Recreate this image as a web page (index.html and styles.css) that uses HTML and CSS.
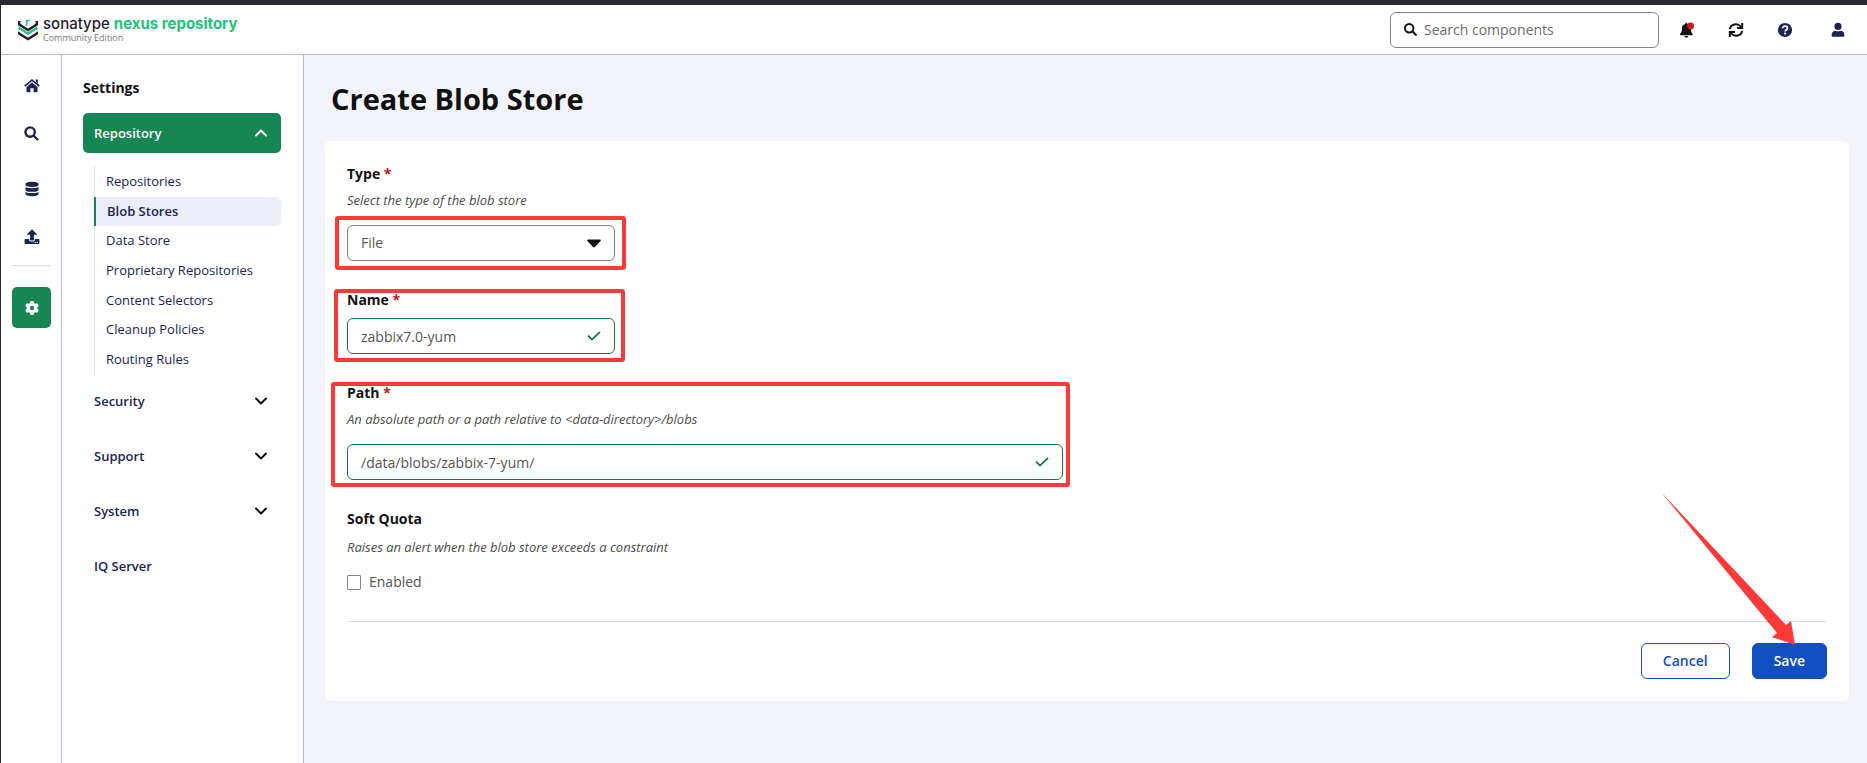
FILE: index.html
```html
<!DOCTYPE html>
<html lang="en">
<head>
<meta charset="utf-8">
<title>Create Blob Store</title>
<link rel="stylesheet" href="styles.css">
</head>
<body>
<header class="topbar">
  <a class="brand" href="#">
    <svg class="brand-mark" width="20" height="22" viewBox="0 0 20 22" fill="none" stroke-width="2.4" aria-hidden="true">
      <path d="M1.2 2v3.600L10 11l8.800-5.400V2" stroke="#231f30"/>
      <path d="M.6 8.800 10 14.700l9.400-5.900" stroke="#1bc47a"/>
      <path d="M.6 12.800v1.400L10 20l9.400-5.800v-1.400" stroke="#231f30"/>
      <path d="M8.600 7V.800M8.600 3.200C9 1.600 10 1.100 11.800 1.300" stroke="#1bc47a" stroke-width="1.500"/>
    </svg>
    <span class="brand-text">
      <span class="brand-name">sonatype <span class="brand-product">nexus repository</span></span>
      <span class="brand-edition">Community Edition</span>
    </span>
  </a>
  <div class="tools">
    <label class="search">
      <svg width="13" height="13" viewBox="0 0 13 13" fill="none" stroke="#111" stroke-width="2" aria-hidden="true"><circle cx="5.200" cy="5.200" r="4.200"/><path d="m8.300 8.300 4.200 4.200"/></svg>
      <input type="search" placeholder="Search components" aria-label="Search components">
    </label>
    <nav class="actions" aria-label="Global actions">
      <button class="icon-button" type="button" aria-label="Notifications">
        <svg width="16" height="16" viewBox="0 0 16 16" aria-hidden="true"><path fill="#111" d="M6.300 1.900C6.300.5 8.300.5 8.300 1.900 11 2.500 11.800 4.500 11.800 6.500c0 3 .7 4 1.700 5.200.6.700.2 1.600-.7 1.600H1.900c-.9 0-1.300-.9-.7-1.600C2.200 10.500 2.900 9.500 2.900 6.500c0-2 .8-4 3.400-4.600ZM5.400 14h3.900c0 2.300-3.900 2.300-3.900 0Z"/><circle cx="11.600" cy="4" r="3.400" fill="#d3161b"/></svg>
      </button>
      <button class="icon-button" type="button" aria-label="Refresh">
        <svg width="16" height="16" viewBox="0 0 16 16" fill="none" stroke="#111" stroke-width="2" aria-hidden="true"><path d="M1.800 7.200C2.600 2.100 9.300.5 13 4.600M14.200.9v5.200H9"/><path d="M14.200 8.900C13.400 14 6.700 15.500 3 11.400M1.800 15.100V9.900H7"/></svg>
      </button>
      <button class="icon-button" type="button" aria-label="Help">
        <svg width="16" height="16" viewBox="0 0 16 16" aria-hidden="true"><circle cx="8" cy="8" r="7.100" fill="#1c2452"/><path d="M5.700 6.300c0-3 4.800-2.700 4.800 0 0 1.500-2.300 1.500-2.300 3.100" fill="none" stroke="#fff" stroke-width="1.700"/><circle cx="8.100" cy="11.600" r="1.150" fill="#fff"/></svg>
      </button>
      <button class="icon-button account" type="button" aria-label="User">
        <svg width="16" height="16" viewBox="0 0 16 16" fill="#1c2452" aria-hidden="true"><circle cx="8" cy="4.300" r="3.600"/><path d="M1.600 13.200c0-3 1.700-4.500 3.900-4.500 1.600.8 3.400.8 5 0 2.200 0 3.900 1.500 3.900 4.500 0 1-.5 1.600-1.400 1.600H3c-.9 0-1.400-.6-1.400-1.600Z"/></svg>
      </button>
    </nav>
  </div>
</header>

<div class="shell">
  <nav class="rail" aria-label="Primary">
    <a class="rail-link" href="#" aria-label="Dashboard">
      <svg width="16" height="14" viewBox="0 0 16 14" aria-hidden="true"><path d="m.7 7.100 7.300-6 7.300 6" fill="none" stroke="#1c2452" stroke-width="1.700"/><path fill="#1c2452" d="M11.800.6h2v4.200l-2-1.700ZM8 3.600l5.500 4.500v4.500c0 .4-.3.700-.7.700H9.600V9.200H6.400v4.100H3.200c-.4 0-.7-.3-.7-.7V8.100Z"/></svg>
    </a>
    <a class="rail-link" href="#" aria-label="Search">
      <svg width="15" height="15" viewBox="0 0 15 15" fill="none" stroke="#1c2452" stroke-width="2.400" aria-hidden="true"><circle cx="6.100" cy="6.100" r="4.700"/><path d="m9.500 9.500 4.500 4.500"/></svg>
    </a>
    <a class="rail-link" href="#" aria-label="Browse">
      <svg width="14" height="16" viewBox="0 0 14 16" fill="#1c2452" aria-hidden="true"><path d="M.5 3C.5-.1 13.500-.1 13.500 3v1.100c0 2.600-13 2.600-13 0ZM.5 6.100c2.700 1.600 10.300 1.600 13 0v2.800c0 2.600-13 2.600-13 0ZM.5 10.900c2.700 1.600 10.300 1.600 13 0v2c0 3-13 3-13 0Z"/></svg>
    </a>
    <a class="rail-link" href="#" aria-label="Upload">
      <svg width="16" height="16" viewBox="0 0 16 16" fill="#1c2452" aria-hidden="true"><path d="M6.100 5.800H3.500c-.5 0-.7-.5-.3-.9L7.500.7c.3-.3.700-.3 1 0l4.300 4.200c.4.400.2.900-.3.900H9.900v5c0 .4-.3.700-.7.700H6.800c-.4 0-.7-.3-.7-.7Z"/><path d="M1.300 10h3.900v1c0 .9.600 1.500 1.500 1.500h2.600c.9 0 1.500-.6 1.500-1.500v-1h3.900c.4 0 .7.300.7.700v3.600c0 .4-.3.700-.7.700H1.300c-.4 0-.7-.3-.7-.7v-3.600c0-.4.300-.7.700-.7Z"/><path fill="#fff" d="M10.500 13.100h1.200v1h-1.200zM12.700 13.100h1.200v1h-1.200z"/></svg>
    </a>
    <a class="rail-link rail-current" href="#" aria-label="Settings" aria-current="page">
      <svg width="16" height="16" viewBox="0 0 16 16" aria-hidden="true"><g fill="#fff"><circle cx="8" cy="8" r="5.400"/><rect x="6.100" y="1" width="3.800" height="14" rx="1.200"/><rect x="6.100" y="1" width="3.800" height="14" rx="1.200" transform="rotate(60 8 8)"/><rect x="6.100" y="1" width="3.800" height="14" rx="1.200" transform="rotate(120 8 8)"/></g><circle cx="8" cy="8" r="2.200" fill="#168754"/></svg>
    </a>
  </nav>

  <nav class="sidebar" aria-label="Settings">
    <h2 class="sidebar-title">Settings</h2>
    <button class="group group-open" type="button" aria-expanded="true">Repository
      <svg width="12" height="8" viewBox="0 0 12 8" aria-hidden="true"><path d="m1 6.500 5-5 5 5"/></svg>
    </button>
    <ul class="tree">
      <li><a class="tree-link" href="#">Repositories</a></li>
      <li><a class="tree-link tree-current" href="#" aria-current="page">Blob Stores</a></li>
      <li><a class="tree-link" href="#">Data Store</a></li>
      <li><a class="tree-link" href="#">Proprietary Repositories</a></li>
      <li><a class="tree-link" href="#">Content Selectors</a></li>
      <li><a class="tree-link" href="#">Cleanup Policies</a></li>
      <li><a class="tree-link" href="#">Routing Rules</a></li>
    </ul>
    <div class="groups">
      <button class="group" type="button" aria-expanded="false">Security
        <svg width="12" height="8" viewBox="0 0 12 8" aria-hidden="true"><path d="m1 1.500 5 5 5-5"/></svg>
      </button>
      <button class="group" type="button" aria-expanded="false">Support
        <svg width="12" height="8" viewBox="0 0 12 8" aria-hidden="true"><path d="m1 1.500 5 5 5-5"/></svg>
      </button>
      <button class="group" type="button" aria-expanded="false">System
        <svg width="12" height="8" viewBox="0 0 12 8" aria-hidden="true"><path d="m1 1.500 5 5 5-5"/></svg>
      </button>
      <a class="group" href="#">IQ Server</a>
    </div>
  </nav>

  <main class="page">
    <h1 class="page-title">Create Blob Store</h1>
    <form class="card">
      <div class="field">
        <label class="label" for="type">Type <span class="required">*</span></label>
        <p class="hint" id="type-hint">Select the type of the blob store</p>
        <div class="control">
          <select class="input" id="type" aria-describedby="type-hint"><option>File</option></select>
          <svg class="control-icon" width="14" height="9" viewBox="0 0 14 9" aria-hidden="true"><path fill="#111" d="M1 .5h12c.8 0 1.100.8.600 1.400L7.900 7.900c-.5.500-1.300.5-1.800 0L.4 1.900C-.1 1.300.2.500 1 .5Z"/></svg>
          <span class="mark mark-type"></span>
        </div>
      </div>
      <div class="field">
        <label class="label" for="name">Name <span class="required">*</span></label>
        <div class="control">
          <input class="input valid" id="name" type="text" value="zabbix7.0-yum">
          <svg class="control-icon" width="14" height="10" viewBox="0 0 14 10" fill="none" stroke="#15734b" stroke-width="1.800" aria-hidden="true"><path d="m1 4.600 4 4L13 .900"/></svg>
        </div>
        <span class="mark mark-name"></span>
      </div>
      <div class="field field-wide">
        <label class="label" for="path">Path <span class="required">*</span></label>
        <p class="hint" id="path-hint">An absolute path or a path relative to &lt;data-directory&gt;/blobs</p>
        <div class="control">
          <input class="input valid" id="path" type="text" value="/data/blobs/zabbix-7-yum/" aria-describedby="path-hint">
          <svg class="control-icon" width="14" height="10" viewBox="0 0 14 10" fill="none" stroke="#15734b" stroke-width="1.800" aria-hidden="true"><path d="m1 4.600 4 4L13 .900"/></svg>
        </div>
        <span class="mark mark-path"></span>
      </div>
      <fieldset class="field quota">
        <legend class="label">Soft Quota</legend>
        <p class="hint">Raises an alert when the blob store exceeds a constraint</p>
        <label class="check"><input class="checkbox" type="checkbox">Enabled</label>
      </fieldset>
      <footer class="form-footer">
        <button class="button" type="button">Cancel</button>
        <button class="button primary" type="submit">Save
          <svg class="pointer" width="136" height="154" viewBox="0 0 136 154" aria-hidden="true"><path fill="#fc3a38" d="M0 0 125 133l5-4 4 24-23-8 5-4Z"/></svg>
        </button>
      </footer>
    </form>
  </main>
</div>
</body>
</html>
```

FILE: styles.css
```css
* { box-sizing: border-box; }

body {
  margin: 0;
  min-height: 100vh;
  display: flex;
  flex-direction: column;
  border-top: 5px solid #2b2a33;
  border-left: 1px solid #2b2a33;
  background: #fff;
  color: #111;
  font: 14px/22px "Open Sans", "Noto Sans", sans-serif;
}

h1, h2, p, ul { margin: 0; padding: 0; }
ul { list-style: none; }
a { color: inherit; text-decoration: none; }
button, input, select { font: inherit; color: inherit; }
svg { display: block; flex: none; }

/* Header */
.topbar {
  display: flex;
  justify-content: space-between;
  align-items: center;
  height: 50px;
  padding: 0 21px 0 17px;
  border-bottom: 1px solid #b4bbdf;
}
.brand { display: flex; align-items: center; gap: 5px; }
.brand-text { display: flex; flex-direction: column; }
.brand-name {
  font: 500 15px/16px Inter, sans-serif;
  color: #231f30;
}
.brand-product { color: #1bc47a; font-weight: 700; }
.brand-edition { font-size: 9px; line-height: 12px; color: #777; }
.tools { display: flex; align-items: center; gap: 20px; }
.search {
  display: flex;
  align-items: center;
  gap: 7px;
  width: 269px;
  height: 36px;
  padding: 0 13px;
  border: 1px solid #85877b;
  border-radius: 6px;
}
.search input {
  flex: 1;
  min-width: 0;
  padding: 0;
  border: 0;
  outline: 0;
  background: none;
}
.search input::placeholder { color: #6c6f68; opacity: 1; }
.actions { display: flex; gap: 33px; }
.icon-button { padding: 0; border: 0; background: none; }
.account { margin-left: 4px; }

/* Body columns */
.shell { flex: 1; display: flex; }
.rail {
  flex: none;
  width: 61px;
  padding: 10px 10px 0 11px;
  border-right: 1px solid #b4bbdf;
}
.rail-link {
  display: flex;
  align-items: center;
  justify-content: center;
  height: 41px;
  margin-bottom: 7px;
  border-radius: 5px;
}
.rail-link:nth-child(3) { margin-top: 14px; }
.rail-current { margin-top: 30px; background: #168754; }
.rail-link:nth-child(4) { position: relative; }
.rail-link:nth-child(4)::after {
  content: "";
  position: absolute;
  left: 0;
  right: 0;
  bottom: -9px;
  border-top: 1px solid #d5d9ec;
}

.sidebar {
  flex: none;
  width: 242px;
  padding: 22px 22px 0 21px;
  border-right: 1px solid #b4bbdf;
  color: #1c2452;
}
.sidebar-title { font-size: 14px; line-height: 22px; color: #111; margin-bottom: 14px; }
.group {
  display: flex;
  align-items: center;
  justify-content: space-between;
  width: 100%;
  height: 40px;
  padding: 0 14px 0 11px;
  border: 0;
  border-radius: 5px;
  background: none;
  font-size: 13px;
  font-weight: 600;
  text-align: left;
}
.group path { fill: none; stroke: #111; stroke-width: 2; stroke-linecap: round; stroke-linejoin: round; }
.group-open { background: #168754; color: #fff; }
.group-open path { stroke: #fff; }
.tree {
  display: grid;
  grid-auto-rows: 29px;
  align-content: space-between;
  min-height: 207px;
  margin: 14px 0 0 11px;
  border-left: 1px solid #dfe0e6;
}
.tree-link { display: block; padding-left: 11px; font-size: 13px; line-height: 29px; }
.tree-current {
  margin-left: -1px;
  border-left: 2px solid #168754;
  border-radius: 0 5px 5px 0;
  background: #ebedf8;
  font-weight: 600;
}
.groups { display: grid; gap: 15px; margin-top: 7px; }

/* Page */
.page {
  flex: 1;
  min-width: 0;
  padding: 22px 18px 22px 21px;
  background: #f3f4fa;
}
.page-title { margin: 0 6px 20px; font-size: 29px; line-height: 44px; }
.card { padding: 22px; border-radius: 6px; background: #fff; }
.field { position: relative; max-width: 268px; margin: 0 0 28px; }
.field-wide, .quota { max-width: 716px; }
.label { display: block; padding: 0; font-weight: 700; }
.required { color: #c2161b; }
.hint { margin-top: 4px; font-size: 13px; font-style: italic; color: #4b4c45; white-space: nowrap; }
.control { position: relative; margin-top: 7px; }
.hint + .control { margin-top: 14px; }
.input {
  display: block;
  appearance: none;
  width: 100%;
  height: 36px;
  padding: 0 36px 0 13px;
  border: 1px solid #85877b;
  border-radius: 6px;
  background: #fff;
  color: #55564f;
}
.valid { border-color: #15734b; }
.control-icon { position: absolute; top: 0; bottom: 0; right: 14px; margin: auto 0; }
.quota { padding: 0; border: 0; }
.quota .hint { margin-top: 6px; }
.check {
  display: flex;
  align-items: center;
  gap: 8px;
  margin-top: 13px;
  color: #55564f;
}
.checkbox { appearance: none; width: 14px; height: 15px; margin: 0; border: 1px solid #85877b; border-radius: 1px; }
.form-footer {
  display: flex;
  justify-content: flex-end;
  gap: 22px;
  padding-top: 21px;
  border-top: 1px solid #dcdeef;
}
.button {
  position: relative;
  height: 36px;
  padding: 0 21px;
  border: 1px solid #0f4fbf;
  border-radius: 6px;
  background: #fff;
  color: #0f4fbf;
  font-weight: 600;
}
.primary { background: #0f4fbf; color: #fff; }

/* Annotations drawn over the form */
.mark { position: absolute; border: 4px solid #fc3a38; border-radius: 3px; pointer-events: none; }
.mark-type { inset: -9px -11px -9px -12px; }
.mark-name { inset: 0 -10px -8px -13px; }
.mark-path { inset: 0 -7px -7px -16px; }
.pointer { position: absolute; right: 29px; bottom: 32px; pointer-events: none; }
```
